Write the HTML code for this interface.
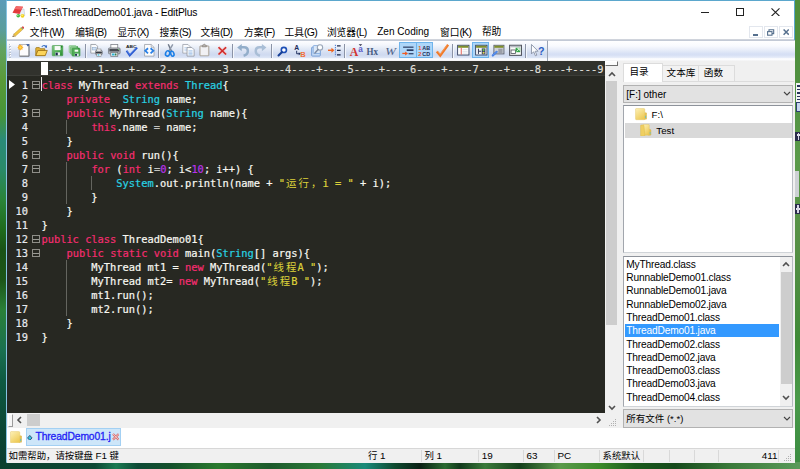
<!DOCTYPE html>
<html><head><meta charset="utf-8"><title>EditPlus</title>
<style>
*{margin:0;padding:0;box-sizing:border-box}
html,body{width:800px;height:469px;overflow:hidden}
body{position:relative;font-family:"Liberation Sans","Noto Sans CJK SC",sans-serif;font-size:11px;color:#000;
 background:#2c7a3a}
#dl{left:0;top:0;width:7px;height:469px;background:linear-gradient(180deg,#5b9bb8 0,#5a9e9c 30px,#62a260 50px,#5a9a38 80px,#469438 115px,#2a8a78 140px,#2a8a68 170px,#2a8438 200px,#1f6a1c 230px,#1a5216 250px,#1c5518 280px,#2a8038 310px,#1a7050 350px,#0e5a42 380px,#0b4634 430px,#0a3c2e 469px)}
#dr{left:794px;top:0;width:6px;height:469px;background:linear-gradient(180deg,#4f8f3a 0,#4f9040 80px,#5a9a4a 160px,#558f45 250px,#3f8a38 340px,#4a9a4a 400px,#3a8a40 469px)}
#db{left:0;top:462px;width:800px;height:7px;background:linear-gradient(90deg,#0b3f2e 0,#0d4834 95px,#1a7a52 116px,#0e4a36 138px,#14502c 170px,#2a7a2e 218px,#1d5a2c 270px,#2a7a38 320px,#1a8a7a 365px,#0f4a30 395px,#0a2014 420px,#2a6a30 445px,#123a1c 460px,#3a7a3a 485px,#14401c 520px,#5a9a4a 560px,#3a8a2a 600px,#1a5a1c 635px,#164a1c 675px,#3a7a3a 730px,#5a9a5a 800px)}
.a{position:absolute;white-space:nowrap}
#win{position:absolute;left:6px;top:0;width:788.6px;height:463.3px;background:#fff;border:1px solid #5ba7cd;border-left-color:#86c4e2;border-bottom-color:#3d7f8f}
#title{left:29.4px;top:5.5px;font-size:10.3px;line-height:14px;letter-spacing:-0.17px}
.menu{top:24.6px;font-size:9.7px;line-height:14px;color:#000}
.l{font-size:10.5px;letter-spacing:-0.75px}
#toolbar{left:7px;top:40px;width:541px;height:21px;background:linear-gradient(180deg,#fdfdff 0,#f3f6fc 4px,#e2e9f6 8px,#d3ddf1 12px,#cfdaf0 14px,#dbe4f5 16.5px,#f6f8fd 17.6px,#fdfdfe 19.4px,#bcbec4 20.2px,#a9abb0 21px);border-top:1px solid #c3cad6;border-right:1px solid #9aa3b4}
#tbrest{left:548px;top:40px;width:246.5px;height:21px;background:linear-gradient(180deg,#ffffff 0,#f8fafe 5px,#e8edf9 9px,#d8e1f5 12.5px,#d6dff4 14px,#e6ecf9 16.5px,#fafbfe 17.6px,#fdfdfe 19.4px,#bcbec4 20.2px,#a9abb0 21px);border-top:1px solid #c3cad6}
#ruler{left:7px;top:61px;width:597.5px;height:15px;background:#31322d;border-bottom:1px solid #3c3d38;color:#e4e4e0;overflow:hidden}
#editor{left:7px;top:76px;width:597.5px;height:337px;background:#272822;overflow:hidden}
.code{font-family:"DejaVu Sans Mono","Liberation Mono","Noto Sans CJK SC",monospace;font-size:10.39px;white-space:pre;letter-spacing:0;-webkit-text-stroke:0.2px currentColor}
.ln{position:absolute;height:14px;line-height:14px;color:#f8f8f2}
.k{color:#f52c70}.t{color:#28d2e2}.n{color:#b832ea}.s{color:#ddd23a}.e{color:#c4c4c0}
.cj{position:relative;left:1.05px;font-family:"Noto Sans CJK SC",sans-serif;font-size:10.4px;letter-spacing:2.11px;line-height:14px;-webkit-text-stroke:0}
.num{position:absolute;width:21.5px;text-align:right;height:14px;line-height:14px;color:#e6e8ee}
.fold{position:absolute;width:7.5px;height:8px;border:1px solid #8e8e88}
.fold:after{content:"";position:absolute;left:0;right:0;top:2.5px;height:1px;background:#9c9c96}
.guide{position:absolute;width:1.2px;background:#64655f}
.sb{background:#f0f0f0}
.ui{font-size:10.4px;line-height:14px}
.flist{font-size:10.2px;letter-spacing:-0.18px}
.st{font-size:9.4px}
.sl{font-size:9.9px}
</style></head><body>
<div id="dl" class="a"></div><div id="dr" class="a"></div><div id="db" class="a"></div><div class="a" style="left:795.6px;top:82.5px;width:5px;height:19px;background:#f2f3f5"></div><div class="a" style="left:797.4px;top:85.0px;width:2.6px;height:1.8px;background:#26345a"></div><div class="a" style="left:797.4px;top:88.5px;width:2.6px;height:1.8px;background:#26345a"></div><div class="a" style="left:797.4px;top:92.0px;width:2.6px;height:1.8px;background:#26345a"></div><div class="a" style="left:797.4px;top:95.5px;width:2.6px;height:1.8px;background:#26345a"></div><div class="a" style="left:797.4px;top:98.5px;width:2.6px;height:1.8px;background:#26345a"></div><div class="a" style="left:795.6px;top:101.5px;width:5px;height:10.5px;background:#c6d6ee;border:1px solid #2e3f70;border-right:none"></div><div class="a" style="left:795px;top:131.5px;width:5px;height:9.5px;background:#2a2c4c"></div><div class="a" style="left:796.5px;top:134px;width:3.5px;height:1.5px;background:#e8e8f0"></div><div class="a" style="left:797.5px;top:132.5px;width:1.2px;height:7px;background:#d8d8e8"></div><div class="a" style="left:795.4px;top:170.5px;width:3.4px;height:26px;background:#cdd1d4"></div><div class="a" style="left:795px;top:204px;width:5px;height:10px;background:#2a2c4c"></div><div class="a" style="left:795.5px;top:208px;width:4.5px;height:1.5px;background:#e8e8f0"></div><div class="a" style="left:797.4px;top:205px;width:1.2px;height:8px;background:#d8d8e8"></div><div id="win"></div><svg class="a" style="left:12px;top:4.6px" width="13.5" height="13.5" viewBox="0 0 27 27"><path d="M17 9L24 8L25.5 21H15Z" fill="#e9eef4" stroke="#b5bfcc" stroke-width="1"/><path d="M8 2.5L22 3.5L15 18L1 15.5Z" fill="#e23b3b"/><path d="M8 2.5L22 3.5L19 9.5L5 8Z" fill="#f26a6a"/><circle cx="12.4" cy="21.6" r="3.6" fill="#3fb63f"/><circle cx="11.6" cy="20.8" r="1.4" fill="#a8eaa0"/><circle cx="21" cy="21.6" r="3.8" fill="#f2d21e"/><circle cx="20.2" cy="20.6" r="1.4" fill="#fff6a0"/></svg><svg class="a" style="left:11.6px;top:25.6px" width="12.6" height="11.8" viewBox="0 0 25 23.6"><path d="M1 22.6L3.4 16.4L7 20Z" fill="#e9c78a" stroke="#8a6a3a" stroke-width=".8"/><path d="M1 22.6L1.9 20.2L3.2 21.6Z" fill="#333"/><path d="M3.4 16.4L17.6 3.6L21.2 7.2L7 20Z" fill="#f3c640" stroke="#b48a1e" stroke-width=".9"/><path d="M17.6 3.6L19 2.4L22.6 6L21.2 7.2Z" fill="#5aa65a"/><path d="M19 2.4L20.6 1Q21.8 .2 23 1.4L23.8 2.2Q24.8 3.4 24 4.6L22.6 6Z" fill="#d84848"/></svg><div class="a" style="left:701px;top:11.5px;width:8.2px;height:1.1px;background:#222"></div><div class="a" style="left:736px;top:8.2px;width:8.2px;height:7.8px;border:1.1px solid #222"></div><svg class="a" style="left:771.4px;top:7.8px" width="9" height="8.6" viewBox="0 0 9 8.6"><path d="M.5 .4L8.5 8.2M8.5 .4L.5 8.2" stroke="#222" stroke-width="1.1" fill="none"/></svg><div class="a" style="left:749.4px;top:25.6px;width:13.4px;height:12.8px;background:#fff;border:1px solid #e3e7ee"></div><div class="a" style="left:764.2px;top:25.6px;width:13.4px;height:12.8px;background:#fff;border:1px solid #e3e7ee"></div><div class="a" style="left:779.2px;top:25.6px;width:13.4px;height:12.8px;background:#fff;border:1px solid #e3e7ee"></div><div class="a" style="left:753.4px;top:34px;width:5px;height:1.6px;background:#56708e"></div><svg class="a" style="left:767.4px;top:29px" width="7.4" height="7" viewBox="0 0 7.4 7"><path d="M2 2.4V.7H6.7V4.6H5" fill="none" stroke="#56708e" stroke-width="1.1"/><rect x=".6" y="2.6" width="4.4" height="3.6" fill="#fff" stroke="#56708e" stroke-width="1.1"/></svg><svg class="a" style="left:783px;top:29.4px" width="6.4" height="6.2" viewBox="0 0 6.4 6.2"><path d="M.6 .5L5.8 5.7M5.8 .5L.6 5.7" stroke="#56708e" stroke-width="1.5" fill="none"/></svg><div class="a" style="left:7px;top:39.4px;width:787px;height:1px;background:#d0d4dc"></div><div id="title" class="a">F:\Test\ThreadDemo01.java - EditPlus</div><div class="a menu" style="left:29.8px">文件<span class="l">(W)</span></div><div class="a menu" style="left:75.2px">编辑<span class="l">(B)</span></div><div class="a menu" style="left:117.4px">显示<span class="l">(X)</span></div><div class="a menu" style="left:159.6px">搜索<span class="l">(S)</span></div><div class="a menu" style="left:200.6px">文档<span class="l">(D)</span></div><div class="a menu" style="left:244.0px">方案<span class="l">(F)</span></div><div class="a menu" style="left:284.6px">工具<span class="l">(G)</span></div><div class="a menu" style="left:326.9px">浏览器<span class="l">(L)</span></div><div class="a menu" style="left:377.2px;font-size:10.05px">Zen Coding</div><div class="a menu" style="left:440.0px">窗口<span class="l">(K)</span></div><div class="a menu" style="left:481.9px">帮助</div><div id="toolbar" class="a"></div><div id="tbrest" class="a"></div><div class="a" style="left:9.4px;top:43.6px;width:1.4px;height:1.4px;background:#b9c1d0"></div><div class="a" style="left:10.2px;top:44.4px;width:1px;height:1px;background:#fff"></div><div class="a" style="left:9.4px;top:46.3px;width:1.4px;height:1.4px;background:#b9c1d0"></div><div class="a" style="left:10.2px;top:47.1px;width:1px;height:1px;background:#fff"></div><div class="a" style="left:9.4px;top:49.0px;width:1.4px;height:1.4px;background:#b9c1d0"></div><div class="a" style="left:10.2px;top:49.8px;width:1px;height:1px;background:#fff"></div><div class="a" style="left:9.4px;top:51.7px;width:1.4px;height:1.4px;background:#b9c1d0"></div><div class="a" style="left:10.2px;top:52.5px;width:1px;height:1px;background:#fff"></div><div class="a" style="left:9.4px;top:54.4px;width:1.4px;height:1.4px;background:#b9c1d0"></div><div class="a" style="left:10.2px;top:55.2px;width:1px;height:1px;background:#fff"></div><div class="a" style="left:9.4px;top:57.1px;width:1.4px;height:1.4px;background:#b9c1d0"></div><div class="a" style="left:10.2px;top:57.9px;width:1px;height:1px;background:#fff"></div><div class="a" style="left:399.3px;top:42.1px;width:17.3px;height:16.2px;background:#aed6f9;border:1px solid #6fb4ec"></div><div class="a" style="left:416.2px;top:42.1px;width:17.0px;height:16.2px;background:#aed6f9;border:1px solid #6fb4ec"></div><div class="a" style="left:472.0px;top:42.1px;width:17.3px;height:16.2px;background:#aed6f9;border:1px solid #6fb4ec"></div><svg class="a" style="left:17.0px;top:44.2px;overflow:visible" width="12.6" height="12.6" viewBox="0 0 16 16"><rect x="3" y="0.6" width="12" height="14.8" fill="#fcfcfd" stroke="#a6a8ae" stroke-width="1"/><path d="M3.4 15.5H15.4V1.6" fill="none" stroke="#6a6c72" stroke-width="1.1"/><path d="M11.6 0.4H16.2L13.9 3.2Z" fill="#2b4e96"/><path d="M4.3 0L5.2 2.4L7.4 1.2L6.3 3.4L8.6 4.3L6.3 5.2L7.4 7.4L5.2 6.3L4.3 8.6L3.4 6.3L1.2 7.4L2.3 5.2L0 4.3L2.3 3.4L1.2 1.2L3.4 2.4Z" fill="#fba51e" opacity=".85"/><circle cx="4.3" cy="4.3" r="2.8" fill="#fbae22"/><circle cx="4.3" cy="4.3" r="1.5" fill="#ffd84a"/></svg><svg class="a" style="left:34.7px;top:44.2px;overflow:visible" width="12.6" height="12.6" viewBox="0 0 16 16"><path d="M1 5.5Q1 4.6 2 4.6H5.5L6.8 6H12.4V14.6H1Z" fill="#e5b53a" stroke="#9c7416" stroke-width="1"/><path d="M3.6 8.2H15.6L13 14.8H1Z" fill="#fbd45c" stroke="#94690f" stroke-width="1"/><path d="M8.6 3.6Q11.4 0.4 14 3" fill="none" stroke="#3f74c6" stroke-width="1.3"/><path d="M15.4 1.2L15 5L11.8 3.8Z" fill="#2f62c4"/></svg><svg class="a" style="left:50.9px;top:44.2px;overflow:visible" width="12.6" height="12.6" viewBox="0 0 16 16"><defs><linearGradient id="sv1" x1="0" y1="0" x2="1" y2="1"><stop offset="0" stop-color="#86c988"/><stop offset=".55" stop-color="#4fae55"/><stop offset="1" stop-color="#2a8a32"/></linearGradient></defs><rect x="1.6" y="2" width="13.4" height="13" rx=".8" fill="url(#sv1)" stroke="#4c9e52" stroke-width=".8"/><rect x="4.6" y="2.6" width="7.6" height="5.2" fill="#f7fbf7"/><rect x="12.6" y="2.8" width="1.6" height="1.6" fill="#1f7a28"/><rect x="5.4" y="10.6" width="6" height="4" fill="#e8eef4"/><rect x="5.8" y="11" width="2.8" height="3.4" fill="#1a254e"/></svg><svg class="a" style="left:68.3px;top:44.2px;overflow:visible" width="12.6" height="12.6" viewBox="0 0 16 16"><rect x="1.4" y="2" width="9" height="9" rx=".8" fill="#a9d9ab" stroke="#86c48a" stroke-width=".8"/><rect x="3.2" y="3.6" width="9.4" height="9.4" rx=".8" fill="#8fce92" stroke="#6db873" stroke-width=".8"/><rect x="5.2" y="5.4" width="10" height="10" rx=".8" fill="#4fab55" stroke="#3a9442" stroke-width=".8"/><rect x="11" y="3" width="1.6" height="1.6" fill="#2f8c38"/><rect x="12.8" y="5" width="1.6" height="1.6" fill="#2f8c38"/><rect x="8.4" y="7.2" width="4.6" height="2.6" fill="#f4faf4"/><rect x="8.6" y="12.2" width="5" height="3" fill="#dfe8f0"/><rect x="9" y="12.6" width="2.4" height="2.4" fill="#1a254e"/></svg><svg class="a" style="left:90.3px;top:44.2px;overflow:visible" width="12.6" height="12.6" viewBox="0 0 16 16"><path d="M1 0.6H7.4L9.6 2.8V11.6H1Z" fill="#fafbfd" stroke="#8f949c" stroke-width="1"/><rect x="2.8" y="4.4" width="5" height="3.2" fill="#cfe2f6" stroke="#8aa6c8" stroke-width=".7"/><rect x="7" y="8.4" width="8.6" height="5" rx="1" fill="#aeb1b8" stroke="#70747c" stroke-width="1"/><rect x="8.6" y="6.4" width="5.4" height="2.6" fill="#fff" stroke="#777" stroke-width=".7"/><rect x="8.6" y="12" width="5.4" height="3.6" fill="#fff" stroke="#777" stroke-width=".7"/><rect x="9.6" y="13" width="2.4" height="1.8" fill="#38b6d8"/><rect x="7.6" y="10.2" width="7.4" height="1.4" fill="#33373e"/></svg><svg class="a" style="left:107.9px;top:44.2px;overflow:visible" width="12.6" height="12.6" viewBox="0 0 16 16"><rect x="3.6" y="0.6" width="8.8" height="5" fill="#fdfdfd" stroke="#7d8188" stroke-width="1"/><rect x="0.6" y="5" width="14.8" height="7.6" rx="1.4" fill="#b4b7be" stroke="#747880" stroke-width="1"/><rect x="1.8" y="6.4" width="12.4" height="3" fill="#44484f"/><rect x="3.6" y="10.6" width="8.8" height="5" fill="#fdfdfd" stroke="#6d7178" stroke-width="1"/><rect x="5" y="12" width="3.4" height="2.6" fill="#31b4d6"/><rect x="8.8" y="12" width="2" height="2.6" fill="#3d7a4a"/><circle cx="13.4" cy="6.6" r=".7" fill="#7be07b"/></svg><svg class="a" style="left:125.1px;top:44.2px;overflow:visible" width="12.6" height="12.6" viewBox="0 0 16 16"><text x="8" y="4.6" font-size="5.6" font-weight="bold" text-anchor="middle" fill="#1c1c22" font-family="Liberation Sans,sans-serif" textLength="13.4" lengthAdjust="spacingAndGlyphs">ABC</text><path d="M2 8.6L6 14.4L15.4 4.4" fill="none" stroke="#2c5bd0" stroke-width="2.6"/><path d="M2.6 8.4L6 13.2L14.8 4.2" fill="none" stroke="#6f9af0" stroke-width=".8"/></svg><svg class="a" style="left:142.5px;top:44.2px;overflow:visible" width="12.6" height="12.6" viewBox="0 0 16 16"><path d="M2 0.6H10.4L14 4.2V15.4H2Z" fill="#fcfcfd" stroke="#9a9ea6" stroke-width="1"/><path d="M10.4 0.6V4.2H14" fill="#e6e8ec" stroke="#9a9ea6" stroke-width=".8"/><path d="M6.4 5.4L2.8 8.6L6.4 11.8" fill="none" stroke="#2a80e6" stroke-width="2.2"/><path d="M9.6 5.4L13.2 8.6L9.6 11.8" fill="none" stroke="#2a80e6" stroke-width="2.2"/></svg><svg class="a" style="left:163.5px;top:44.2px;overflow:visible" width="12.6" height="12.6" viewBox="0 0 16 16"><path d="M5.4 0.4L9.6 9.4" stroke="#6e7888" stroke-width="1.8"/><path d="M11.2 0.4L6 9.4" stroke="#8d97a8" stroke-width="1.8"/><ellipse cx="4.6" cy="12" rx="2.6" ry="3.4" fill="none" stroke="#1b7fe6" stroke-width="2" transform="rotate(20 4.6 12)"/><ellipse cx="10.6" cy="12.4" rx="2" ry="3.2" fill="none" stroke="#1b7fe6" stroke-width="2" transform="rotate(-18 10.6 12.4)"/></svg><svg class="a" style="left:181.7px;top:44.2px;overflow:visible" width="12.6" height="12.6" viewBox="0 0 16 16"><path d="M1 0.6H7.6L10.4 3.4V11.6H1Z" fill="#fbfcfe" stroke="#9aa0aa" stroke-width="1"/><path d="M3 4.6H8M3 6.6H8M3 8.6H8" stroke="#a9c6ea" stroke-width=".9"/><path d="M6.4 4.4H12.6L15.4 7.2V15.4H6.4Z" fill="#fbfcfe" stroke="#8d939d" stroke-width="1"/><path d="M8.2 8.6H13.4M8.2 10.4H13.4M8.2 12.2H13.4M8.2 13.8H13.4" stroke="#8fb5e4" stroke-width=".9"/></svg><svg class="a" style="left:198.3px;top:44.2px;overflow:visible" width="12.6" height="12.6" viewBox="0 0 16 16"><rect x="2.4" y="2.4" width="11.4" height="12.6" rx=".8" fill="#dcd8d2" stroke="#9c948a" stroke-width="1"/><rect x="3.6" y="3.8" width="9" height="10.4" fill="#f1f1f4"/><path d="M5.4 3.6V2Q5.4 1.4 6 1.4H6.8Q7 .2 8 .2Q9 .2 9.2 1.4H10Q10.6 1.4 10.6 2V3.6Z" fill="#b7b3ad" stroke="#7f7b76" stroke-width=".8"/></svg><svg class="a" style="left:215.5px;top:44.2px;overflow:visible" width="12.6" height="12.6" viewBox="0 0 16 16"><path d="M3.2 4.2L12.8 13.4M12.8 4.2L3.2 13.4" stroke="#f3c4c4" stroke-width="3.6" fill="none"/><path d="M3.2 4.2L12.8 13.4M12.8 4.2L3.2 13.4" stroke="#cf2a2a" stroke-width="2" fill="none"/></svg><svg class="a" style="left:236.7px;top:44.2px;overflow:visible" width="12.6" height="12.6" viewBox="0 0 16 16"><path d="M3.4 4.2H9Q13.8 4.2 13.8 9Q13.8 13.6 8.4 15" fill="none" stroke="#93aeca" stroke-width="3.2"/><path d="M0.2 4.6L6 0V9.2Z" fill="#93aeca"/></svg><svg class="a" style="left:254.3px;top:44.2px;overflow:visible" width="12.6" height="12.6" viewBox="0 0 16 16"><path d="M12.6 4.2H7Q2.2 4.2 2.2 9Q2.2 13.6 7.6 15" fill="none" stroke="#a9bed6" stroke-width="3.2"/><path d="M15.8 4.6L10 0V9.2Z" fill="#a9bed6"/></svg><svg class="a" style="left:275.7px;top:44.2px;overflow:visible" width="12.6" height="12.6" viewBox="0 0 16 16"><circle cx="10" cy="7.6" r="3.3" fill="#fdfeff" stroke="#1d4fb6" stroke-width="2"/><path d="M7.4 10.4L3.2 14.6" stroke="#173f96" stroke-width="2.6" stroke-linecap="round"/></svg><svg class="a" style="left:293.7px;top:44.2px;overflow:visible" width="12.6" height="12.6" viewBox="0 0 16 16"><text x="0.4" y="7.4" font-size="8.6" font-weight="bold" fill="#1b2a5a" font-family="Liberation Sans,sans-serif">A</text><text x="8" y="16" font-size="9.6" font-weight="bold" fill="#f0703a" font-family="Liberation Sans,sans-serif">B</text><path d="M3.4 8.6V12.4H6.8" fill="none" stroke="#1b2a5a" stroke-width="1.2"/><path d="M6 10.4L8.4 12.4L6 14.4Z" fill="#1b2a5a"/></svg><svg class="a" style="left:310.5px;top:44.2px;overflow:visible" width="12.6" height="12.6" viewBox="0 0 16 16"><rect x="0.8" y="4" width="11" height="11.4" rx="1" fill="#c5daf4" stroke="#5f8fd0" stroke-width="1"/><rect x="2.8" y="2" width="9" height="10" rx="1" fill="#dbe8f8" stroke="#6f9cd8" stroke-width=".9"/><circle cx="11.4" cy="4.4" r="3.4" fill="#fdfeff" stroke="#9aa6b8" stroke-width="1.4"/><path d="M9 7L5 11.4" stroke="#7d8aa0" stroke-width="1.8" stroke-linecap="round"/></svg><svg class="a" style="left:327.9px;top:44.2px;overflow:visible" width="12.6" height="12.6" viewBox="0 0 16 16"><path d="M0 8H5.4" stroke="#f0641e" stroke-width="1.8"/><path d="M4.4 4.8L8.2 8L4.4 11.2Z" fill="#f0641e"/><path d="M9.4 1V15.6" stroke="#3c6fd0" stroke-width="1.2" stroke-dasharray="1.6 1.2"/><path d="M11.4 2.4H16M11.4 8H16M11.4 13.8H16" stroke="#1b2748" stroke-width="1.7"/></svg><svg class="a" style="left:349.7px;top:44.2px;overflow:visible" width="12.6" height="12.6" viewBox="0 0 16 16"><text x="-0.4" y="15.4" font-size="15" font-weight="bold" fill="#d23232" font-family="Liberation Serif,serif">A</text><text x="10.6" y="10.2" font-size="10.4" font-weight="bold" fill="#5a5ac8" font-family="Liberation Sans,sans-serif">a</text><path d="M11 0.2H15.6L13.3 2.6Z" fill="#2a2f4a"/></svg><svg class="a" style="left:366.3px;top:44.2px;overflow:visible" width="12.6" height="12.6" viewBox="0 0 16 16"><text x="8" y="14" font-size="12.6" font-weight="bold" text-anchor="middle" fill="#465b82" font-family="Liberation Serif,serif" textLength="14.6" lengthAdjust="spacingAndGlyphs">Hx</text></svg><svg class="a" style="left:383.9px;top:44.2px;overflow:visible" width="12.6" height="12.6" viewBox="0 0 16 16"><text x="8.4" y="14" font-size="13.4" font-style="italic" text-anchor="middle" fill="#4e6288" font-family="Liberation Serif,serif" textLength="13.6" lengthAdjust="spacingAndGlyphs">W</text></svg><svg class="a" style="left:401.7px;top:44.2px;overflow:visible" width="12.6" height="12.6" viewBox="0 0 16 16"><path d="M1.4 4H14.6" stroke="#1f2d55" stroke-width="1.4"/><path d="M6 7.8H14.6" stroke="#1f2d55" stroke-width="2"/><path d="M8.4 12.4H14.6" stroke="#1f2d55" stroke-width="1.4"/><path d="M0.4 12H4.6" stroke="#f0581e" stroke-width="1.6"/><path d="M4 9.4L7.6 12L4 14.6Z" fill="#f0581e"/></svg><svg class="a" style="left:418.3px;top:44.2px;overflow:visible" width="12.6" height="12.6" viewBox="0 0 16 16"><text x="0.2" y="7.2" font-size="7.4" font-weight="bold" fill="#f0582a" font-family="Liberation Sans,sans-serif">1</text><text x="0.2" y="15.4" font-size="7.4" font-weight="bold" fill="#f0582a" font-family="Liberation Sans,sans-serif">2</text><text x="5.4" y="7" font-size="6.6" font-weight="bold" fill="#1f2d55" font-family="Liberation Sans,sans-serif" textLength="10" lengthAdjust="spacingAndGlyphs">AB</text><text x="5.4" y="15.2" font-size="6.6" font-weight="bold" fill="#1f2d55" font-family="Liberation Sans,sans-serif" textLength="10" lengthAdjust="spacingAndGlyphs">CD</text></svg><svg class="a" style="left:435.7px;top:44.2px;overflow:visible" width="12.6" height="12.6" viewBox="0 0 16 16"><path d="M1 9.4L5.4 14.6L15.4 1" fill="none" stroke="#f07a2a" stroke-width="3"/><path d="M1.8 8.8L5.4 13L14.6 .6" fill="none" stroke="#f9a666" stroke-width=".9"/></svg><svg class="a" style="left:457.1px;top:44.2px;overflow:visible" width="12.6" height="12.6" viewBox="0 0 16 16"><rect x="0.8" y="1.6" width="14.4" height="12.4" fill="#fdfdfd" stroke="#2d3b5c" stroke-width="1.1"/><rect x="1.4" y="2.2" width="13.2" height="2.6" fill="#7f8f2c"/><path d="M5.4 5V13.4" stroke="#e2574c" stroke-width="1.2"/><path d="M7 7H13.4M7 9.4H13.4M7 11.6H13.4" stroke="#d9dde6" stroke-width=".9"/></svg><svg class="a" style="left:474.7px;top:44.2px;overflow:visible" width="12.6" height="12.6" viewBox="0 0 16 16"><rect x="0.8" y="1.6" width="14.4" height="12.4" fill="#f4f5f8" stroke="#2d3b5c" stroke-width="1.1"/><rect x="1.4" y="2.2" width="13.2" height="2.6" fill="#7f8f2c"/><path d="M4.4 6V12.6M4.4 9.2H8" stroke="#2a3350" stroke-width="1.2" fill="none"/><rect x="8.6" y="5.6" width="4.6" height="7.6" fill="#3a4468"/><circle cx="10.9" cy="7.6" r="1.3" fill="#6fd04a"/><circle cx="10.9" cy="11.2" r="1.3" fill="#e8d84a"/></svg><svg class="a" style="left:491.9px;top:44.2px;overflow:visible" width="12.6" height="12.6" viewBox="0 0 16 16"><rect x="2.4" y="1.6" width="12.8" height="11" fill="#cfd2d8" stroke="#5a6070" stroke-width="1.1"/><rect x="3" y="2.2" width="11.6" height="2.6" fill="#7f8f2c"/><rect x="8" y="6" width="5.4" height="5.4" fill="#9a9ea8"/><path d="M1 14.6L6 10" stroke="#2f6fe0" stroke-width="2.6" stroke-linecap="round"/><path d="M1 14.6L6 10" stroke="#9cc4ff" stroke-width=".8" stroke-linecap="round"/></svg><svg class="a" style="left:508.9px;top:44.2px;overflow:visible" width="12.6" height="12.6" viewBox="0 0 16 16"><rect x="0.8" y="1.6" width="15" height="12.8" fill="#fafafa" stroke="#4a4e58" stroke-width="1.3"/><rect x="1.6" y="2.4" width="13.4" height="1.8" fill="#b8bcc4"/><rect x="2.6" y="7.6" width="5.6" height="4.6" fill="#fff" stroke="#4a4e58" stroke-width="1"/><rect x="8.4" y="4.8" width="5.8" height="5.6" fill="#36a64a"/><path d="M9.6 9.4L13 6M10.6 5.8H13.2V8.4" stroke="#e8ffe8" stroke-width="1.1" fill="none"/></svg><svg class="a" style="left:530.7px;top:44.2px;overflow:visible" width="12.6" height="12.6" viewBox="0 0 16 16"><path d="M0.6 0.6V12.6L3.4 9.8L5.6 15L7.4 14.2L5.4 9.2H9Z" fill="#fbfcfe" stroke="#7c869a" stroke-width="1"/><text x="9" y="13.8" font-size="13.6" font-weight="bold" fill="#2c5fc4" font-family="Liberation Sans,sans-serif">?</text></svg><div class="a" style="left:84.7px;top:43.8px;width:1.2px;height:14px;background:#8b93a6"></div><div class="a" style="left:86.0px;top:43.8px;width:1px;height:14px;background:#f4f7fc"></div><div class="a" style="left:157.9px;top:43.8px;width:1.2px;height:14px;background:#8b93a6"></div><div class="a" style="left:159.2px;top:43.8px;width:1px;height:14px;background:#f4f7fc"></div><div class="a" style="left:231.5px;top:43.8px;width:1.2px;height:14px;background:#8b93a6"></div><div class="a" style="left:232.8px;top:43.8px;width:1px;height:14px;background:#f4f7fc"></div><div class="a" style="left:270.6px;top:43.8px;width:1.2px;height:14px;background:#8b93a6"></div><div class="a" style="left:271.9px;top:43.8px;width:1px;height:14px;background:#f4f7fc"></div><div class="a" style="left:343.7px;top:43.8px;width:1.2px;height:14px;background:#8b93a6"></div><div class="a" style="left:345.0px;top:43.8px;width:1px;height:14px;background:#f4f7fc"></div><div class="a" style="left:451.7px;top:43.8px;width:1.2px;height:14px;background:#8b93a6"></div><div class="a" style="left:453.0px;top:43.8px;width:1px;height:14px;background:#f4f7fc"></div><div class="a" style="left:525.1px;top:43.8px;width:1.2px;height:14px;background:#8b93a6"></div><div class="a" style="left:526.4px;top:43.8px;width:1px;height:14px;background:#f4f7fc"></div><div id="ruler" class="a"><div class="a" style="left:34.2px;top:1px;width:6.6px;height:13.5px;background:#fff"></div><div class="a code" style="left:40.66px;top:1.2px;line-height:14px;color:#deded8">---+----1----+----2----+----3----+----4----+----5----+----6----+----7----+----8----+----9</div></div><div id="editor" class="a"><div class="num code" style="left:-0.50px;top:1.60px">1</div><div class="ln code" style="left:34.40px;top:1.60px"><span class="k">class</span> MyThread <span class="k">extends</span> <span class="t">Thread</span>{</div><div class="num code" style="left:-0.50px;top:15.63px">2</div><div class="ln code" style="left:34.40px;top:15.63px">    <span class="k">private</span>  <span class="t">String</span> name;</div><div class="num code" style="left:-0.50px;top:29.66px">3</div><div class="ln code" style="left:34.40px;top:29.66px">    <span class="k">public</span> MyThread(<span class="t">String</span> name){</div><div class="num code" style="left:-0.50px;top:43.69px">4</div><div class="ln code" style="left:34.40px;top:43.69px">        <span class="k">this</span>.name <span class="e">=</span> name;</div><div class="num code" style="left:-0.50px;top:57.72px">5</div><div class="ln code" style="left:34.40px;top:57.72px">    }</div><div class="num code" style="left:-0.50px;top:71.75px">6</div><div class="ln code" style="left:34.40px;top:71.75px">    <span class="k">public</span> <span class="k">void</span> run(){</div><div class="num code" style="left:-0.50px;top:85.78px">7</div><div class="ln code" style="left:34.40px;top:85.78px">        <span class="k">for</span> (<span class="k">int</span> i<span class="e">=</span><span class="n">0</span>; i&lt;<span class="n">10</span>; i++) {</div><div class="num code" style="left:-0.50px;top:99.81px">8</div><div class="ln code" style="left:34.40px;top:99.81px">            <span class="t">System</span>.out.println(name + <span class="s">"<span class="cj">运行，</span>i = "</span> + i);</div><div class="num code" style="left:-0.50px;top:113.84px">9</div><div class="ln code" style="left:34.40px;top:113.84px">        }</div><div class="num code" style="left:-0.50px;top:127.87px">10</div><div class="ln code" style="left:34.40px;top:127.87px">    }</div><div class="num code" style="left:-0.50px;top:141.90px">11</div><div class="ln code" style="left:34.40px;top:141.90px">}</div><div class="num code" style="left:-0.50px;top:155.93px">12</div><div class="ln code" style="left:34.40px;top:155.93px"><span class="k">public</span> <span class="k">class</span> ThreadDemo01{</div><div class="num code" style="left:-0.50px;top:169.96px">13</div><div class="ln code" style="left:34.40px;top:169.96px">    <span class="k">public</span> <span class="k">static</span> <span class="k">void</span> main(<span class="t">String</span>[] args){</div><div class="num code" style="left:-0.50px;top:183.99px">14</div><div class="ln code" style="left:34.40px;top:183.99px">        MyThread mt1 = <span class="k">new</span> MyThread(<span class="s">"<span class="cj">线程</span>A "</span>);</div><div class="num code" style="left:-0.50px;top:198.02px">15</div><div class="ln code" style="left:34.40px;top:198.02px">        MyThread mt2= <span class="k">new</span> MyThread(<span class="s">"<span class="cj">线程</span>B "</span>);</div><div class="num code" style="left:-0.50px;top:212.05px">16</div><div class="ln code" style="left:34.40px;top:212.05px">        mt1.run();</div><div class="num code" style="left:-0.50px;top:226.08px">17</div><div class="ln code" style="left:34.40px;top:226.08px">        mt2.run();</div><div class="num code" style="left:-0.50px;top:240.11px">18</div><div class="ln code" style="left:34.40px;top:240.11px">    }</div><div class="num code" style="left:-0.50px;top:254.14px">19</div><div class="ln code" style="left:34.40px;top:254.14px">}</div><div class="fold" style="left:25.0px;top:4.80px"></div><div class="fold" style="left:25.0px;top:32.86px"></div><div class="fold" style="left:25.0px;top:74.95px"></div><div class="fold" style="left:25.0px;top:88.98px"></div><div class="fold" style="left:25.0px;top:159.13px"></div><div class="fold" style="left:25.0px;top:173.16px"></div><div class="guide" style="left:58.9px;top:43.7px;height:14.0px"></div><div class="guide" style="left:58.9px;top:85.8px;height:42.1px"></div><div class="guide" style="left:83.9px;top:99.8px;height:14.0px"></div><div class="guide" style="left:58.9px;top:184.0px;height:56.1px"></div><svg class="a" style="left:2px;top:4.2px" width="6" height="9" viewBox="0 0 6 9"><path d="M0 0L6 4.5L0 9Z" fill="#fff"/></svg><div class="a" style="left:34.0px;top:1.0px;width:1px;height:14px;background:#e6e6e6"></div></div><div class="a sb" style="left:604.5px;top:61px;width:14px;height:352px"></div><div class="a" style="left:605px;top:61.4px;width:12.6px;height:4.8px;background:#fbfbfb;border:1px solid #6e6e6e;border-top-color:#fff;border-left-color:#fff"></div><svg class="a" style="left:607.5px;top:71.0px" width="8" height="8" viewBox="0 0 8 8"><path d="M1 5L4 2L7 5" fill="none" stroke="#505050" stroke-width="1.6"/></svg><div class="a" style="left:606px;top:81px;width:11.4px;height:243.5px;background:#cdcdcd"></div><svg class="a" style="left:607.7px;top:404.0px" width="8" height="8" viewBox="0 0 8 8"><path d="M1 2L4 5L7 2" fill="none" stroke="#505050" stroke-width="1.6"/></svg><div class="a sb" style="left:7px;top:413px;width:613px;height:15px"></div><div class="a" style="left:7.5px;top:414px;width:5px;height:12.6px;background:#f6f6f6;border:1px solid #9b9b9b;border-top-color:#fff;border-left-color:#fff"></div><svg class="a" style="left:15.5px;top:416.0px" width="8" height="8" viewBox="0 0 8 8"><path d="M5 1L2 4L5 7" fill="none" stroke="#505050" stroke-width="1.6"/></svg><div class="a" style="left:27px;top:414px;width:12.6px;height:12.4px;background:#cdcdcd"></div><svg class="a" style="left:594.2px;top:416.4px" width="8" height="8" viewBox="0 0 8 8"><path d="M3 1L6 4L3 7" fill="none" stroke="#505050" stroke-width="1.6"/></svg><div class="a" style="left:615.0px;top:419.0px;width:1px;height:1px;background:#b0b0b0"></div><div class="a" style="left:613.0px;top:421.0px;width:1px;height:1px;background:#b0b0b0"></div><div class="a" style="left:615.0px;top:421.0px;width:1px;height:1px;background:#b0b0b0"></div><div class="a" style="left:611.0px;top:423.0px;width:1px;height:1px;background:#b0b0b0"></div><div class="a" style="left:613.0px;top:423.0px;width:1px;height:1px;background:#b0b0b0"></div><div class="a" style="left:615.0px;top:423.0px;width:1px;height:1px;background:#b0b0b0"></div><div class="a" style="left:609.0px;top:425.0px;width:1px;height:1px;background:#b0b0b0"></div><div class="a" style="left:611.0px;top:425.0px;width:1px;height:1px;background:#b0b0b0"></div><div class="a" style="left:613.0px;top:425.0px;width:1px;height:1px;background:#b0b0b0"></div><div class="a" style="left:615.0px;top:425.0px;width:1px;height:1px;background:#b0b0b0"></div><div class="a sb" style="left:618.5px;top:61px;width:176px;height:367px"></div><div class="a" style="left:623px;top:81px;width:170.5px;height:1px;background:#dcdcdc"></div><div class="a" style="left:623px;top:62.5px;width:39.5px;height:19.5px;background:#fff;border:1px solid #dcdcdc;border-bottom:none"></div><div class="a" style="left:663px;top:65px;width:35.5px;height:16px;background:#f2f2f2;border:1px solid #dcdcdc;border-bottom:none;border-left:none"></div><div class="a" style="left:698.5px;top:65px;width:36.5px;height:16px;background:#f2f2f2;border:1px solid #dcdcdc;border-bottom:none;border-left:none"></div><div class="a ui" style="left:629.5px;top:64.6px;font-size:9.6px">目录</div><div class="a ui" style="left:666.6px;top:66.2px;font-size:9.6px">文本库</div><div class="a ui" style="left:703.8px;top:66.2px;font-size:9.6px">函数</div><div class="a" style="left:623px;top:84.5px;width:170px;height:18.8px;background:#e2e2e2;border:1px solid #b2b2b2"></div><div class="a ui" style="left:626.3px;top:87.8px;font-size:10px">[F:] other</div><svg class="a" style="left:782.5px;top:90.0px" width="8" height="8" viewBox="0 0 8 8"><path d="M1 2L4 5L7 2" fill="none" stroke="#444" stroke-width="1.1"/></svg><div class="a" style="left:623px;top:104.8px;width:169.5px;height:148.2px;background:#fff;border:1px solid #82878f;border-color:#8e939b #b8bcc2 #d0d4d8 #a2a6ad"></div><div class="a" style="left:625.2px;top:123px;width:166.8px;height:15px;background:#d9d9d9"></div><svg class="a" style="left:635.0px;top:108.2px" width="12.0" height="12.4" viewBox="0 0 24 25"><defs><linearGradient id="fg6458" x1="0" y1="0" x2="0.6" y2="1"><stop offset="0" stop-color="#fdf1b8"/><stop offset="1" stop-color="#eecb58"/></linearGradient></defs><path d="M19 9.5H22Q23.4 9.5 23.4 11V21.5Q23.4 22.6 22 22.6H18Z" fill="#e9c250" stroke="#d0a838" stroke-width=".7"/><rect x="20" y="15.5" width="2.4" height="5" fill="#6fc0b8"/><path d="M1 2.4Q1 1 2.4 1H17.6Q19.6 1 19.6 3V22.4Q19.6 23.6 18.2 23.6H2.4Q1 23.6 1 22.2Z" fill="url(#fg6458)" stroke="#e2c25a" stroke-width=".8"/></svg><svg class="a" style="left:639.8px;top:124.0px" width="12.0" height="12.4" viewBox="0 0 24 25"><defs><linearGradient id="fg6522" x1="0" y1="0" x2="0.6" y2="1"><stop offset="0" stop-color="#fdf1b8"/><stop offset="1" stop-color="#eecb58"/></linearGradient></defs><path d="M17 11H20.6Q22 11 22 12.4V21.4Q22 22.6 20.8 22.6H17Z" fill="#e9c250" stroke="#d0a838" stroke-width=".7"/><rect x="18.8" y="16" width="2.4" height="4.6" fill="#6fc0b8"/><path d="M6 1H17Q18.6 1 18.6 2.6V21.4Q18.6 22.6 17.2 22.6H6Z" fill="url(#fg6522)" stroke="#e2c25a" stroke-width=".8"/><path d="M1 3.2Q1 2 2.2 2H6.4Q7.6 2 8 3.4L9.6 22.6Q9.8 24.4 8.4 24.4H2.4Q1 24.4 1 23Z" fill="#efcf62" stroke="#dcb848" stroke-width=".8"/></svg><div class="a ui" style="left:651.5px;top:108.2px;font-size:9.7px;letter-spacing:.1px">F:\</div><div class="a ui" style="left:656.2px;top:123.7px;font-size:9.7px;letter-spacing:.1px">Test</div><div class="a" style="left:623px;top:256.3px;width:169.5px;height:150.7px;background:#fff;border:1px solid #82878f;border-color:#8e939b #b8bcc2 #d0d4d8 #a2a6ad"></div><div class="a ui flist" style="left:626.3px;top:257.9px;">MyThread.class</div><div class="a ui flist" style="left:626.3px;top:271.2px;">RunnableDemo01.class</div><div class="a ui flist" style="left:626.3px;top:284.4px;">RunnableDemo01.java</div><div class="a ui flist" style="left:626.3px;top:297.7px;">RunnableDemo02.java</div><div class="a ui flist" style="left:626.3px;top:311.0px;">ThreadDemo01.class</div><div class="a" style="left:624.7px;top:324.1px;width:154.2px;height:13.2px;background:#3399ff"></div><div class="a ui flist" style="left:626.3px;top:324.2px;color:#fff;">ThreadDemo01.java</div><div class="a ui flist" style="left:626.3px;top:337.5px;">ThreadDemo02.class</div><div class="a ui flist" style="left:626.3px;top:350.8px;">ThreadDemo02.java</div><div class="a ui flist" style="left:626.3px;top:364.1px;">ThreadDemo03.class</div><div class="a ui flist" style="left:626.3px;top:377.3px;">ThreadDemo03.java</div><div class="a ui flist" style="left:626.3px;top:390.6px;">ThreadDemo04.class</div><div class="a sb" style="left:780.3px;top:257.3px;width:12px;height:148.7px"></div><svg class="a" style="left:782.3px;top:260.6px" width="8" height="8" viewBox="0 0 8 8"><path d="M1 5L4 2L7 5" fill="none" stroke="#505050" stroke-width="1.6"/></svg><div class="a" style="left:780.8px;top:271.6px;width:11.2px;height:112.4px;background:#cdcdcd"></div><svg class="a" style="left:782.3px;top:394.3px" width="8" height="8" viewBox="0 0 8 8"><path d="M1 2L4 5L7 2" fill="none" stroke="#505050" stroke-width="1.6"/></svg><div class="a" style="left:623px;top:409.3px;width:170px;height:18.4px;background:#e2e2e2;border:1px solid #b2b2b2"></div><div class="a ui" style="left:626.3px;top:412.2px;font-size:9.5px">所有文件 (*.*)</div><svg class="a" style="left:782.5px;top:414.5px" width="8" height="8" viewBox="0 0 8 8"><path d="M1 2L4 5L7 2" fill="none" stroke="#444" stroke-width="1.1"/></svg><div class="a" style="left:7px;top:428px;width:787.5px;height:19.5px;background:#fff"></div><svg class="a" style="left:9.6px;top:430.8px" width="12.0" height="12.6" viewBox="0 0 24 25"><defs><linearGradient id="fg526" x1="0" y1="0" x2="0.6" y2="1"><stop offset="0" stop-color="#fdf1b8"/><stop offset="1" stop-color="#eecb58"/></linearGradient></defs><path d="M19 9.5H22Q23.4 9.5 23.4 11V21.5Q23.4 22.6 22 22.6H18Z" fill="#e9c250" stroke="#d0a838" stroke-width=".7"/><rect x="20" y="15.5" width="2.4" height="5" fill="#6fc0b8"/><path d="M1 2.4Q1 1 2.4 1H17.6Q19.6 1 19.6 3V22.4Q19.6 23.6 18.2 23.6H2.4Q1 23.6 1 22.2Z" fill="url(#fg526)" stroke="#e2c25a" stroke-width=".8"/></svg><div class="a" style="left:25.8px;top:428.3px;width:95.4px;height:17.8px;background:#cde6f9;border:1px solid #a3d0f3"></div><svg class="a" style="left:27.2px;top:434.6px" width="5.6" height="5.8" viewBox="0 0 6 7"><path d="M3 0.5L5.7 3.5L3 6.5L0.3 3.5Z" fill="#35c3dc" stroke="#1d2d5a" stroke-width="0.9"/></svg><div class="a" id="dtab" style="left:35.5px;top:430.3px;font-size:10.35px;letter-spacing:-0.14px;line-height:14px;color:#2323f5;-webkit-text-stroke:0.3px #2323f5">ThreadDemo01.j</div><svg class="a" style="left:111.6px;top:433.2px" width="7.6" height="7.6" viewBox="0 0 8 8"><path d="M1 1L7 7M7 1L1 7" stroke="#d97070" stroke-width="2.3" fill="none"/><path d="M1 1L7 7M7 1L1 7" stroke="#fbe9e9" stroke-width="0.7" fill="none"/></svg><div class="a" style="left:7px;top:447.5px;width:787.5px;height:15.5px;background:#f0f0f0;border-top:1px solid #d7d7d7"></div><div class="a" style="left:420.6px;top:449.5px;width:1px;height:12px;background:#d9d9d9"></div><div class="a" style="left:477.6px;top:449.5px;width:1px;height:12px;background:#d9d9d9"></div><div class="a" style="left:522.6px;top:449.5px;width:1px;height:12px;background:#d9d9d9"></div><div class="a" style="left:553.7px;top:449.5px;width:1px;height:12px;background:#d9d9d9"></div><div class="a" style="left:598.7px;top:449.5px;width:1px;height:12px;background:#d9d9d9"></div><div class="a" style="left:643.0px;top:449.5px;width:1px;height:12px;background:#d9d9d9"></div><div class="a" style="left:668.7px;top:449.5px;width:1px;height:12px;background:#d9d9d9"></div><div class="a" style="left:693.7px;top:449.5px;width:1px;height:12px;background:#d9d9d9"></div><div class="a" style="left:718.4px;top:449.5px;width:1px;height:12px;background:#d9d9d9"></div><div class="a" style="left:778.4px;top:449.5px;width:1px;height:12px;background:#d9d9d9"></div><div class="a ui st" style="left:8.5px;top:448.6px">如需帮助，请按键盘 <span class="sl">F1</span> 键</div><div class="a ui st" style="left:368.0px;top:448.6px">行 <span class="sl">1</span></div><div class="a ui st" style="left:424.4px;top:448.6px">列 <span class="sl">1</span></div><div class="a ui st" style="left:481.7px;top:448.6px"><span class="sl">19</span></div><div class="a ui st" style="left:526.4px;top:448.6px"><span class="sl">63</span></div><div class="a ui st" style="left:557.5px;top:448.6px"><span class="sl">PC</span></div><div class="a ui st" style="left:602.5px;top:448.6px">系统默认</div><div class="a ui st" style="left:740px;width:37.6px;text-align:right;top:448.6px"><span class="sl">411</span></div><div class="a" style="left:790.0px;top:454.0px;width:1px;height:1px;background:#b0b0b0"></div><div class="a" style="left:788.0px;top:456.0px;width:1px;height:1px;background:#b0b0b0"></div><div class="a" style="left:790.0px;top:456.0px;width:1px;height:1px;background:#b0b0b0"></div><div class="a" style="left:786.0px;top:458.0px;width:1px;height:1px;background:#b0b0b0"></div><div class="a" style="left:788.0px;top:458.0px;width:1px;height:1px;background:#b0b0b0"></div><div class="a" style="left:790.0px;top:458.0px;width:1px;height:1px;background:#b0b0b0"></div><div class="a" style="left:784.0px;top:460.0px;width:1px;height:1px;background:#b0b0b0"></div><div class="a" style="left:786.0px;top:460.0px;width:1px;height:1px;background:#b0b0b0"></div><div class="a" style="left:788.0px;top:460.0px;width:1px;height:1px;background:#b0b0b0"></div><div class="a" style="left:790.0px;top:460.0px;width:1px;height:1px;background:#b0b0b0"></div>
</body></html>
